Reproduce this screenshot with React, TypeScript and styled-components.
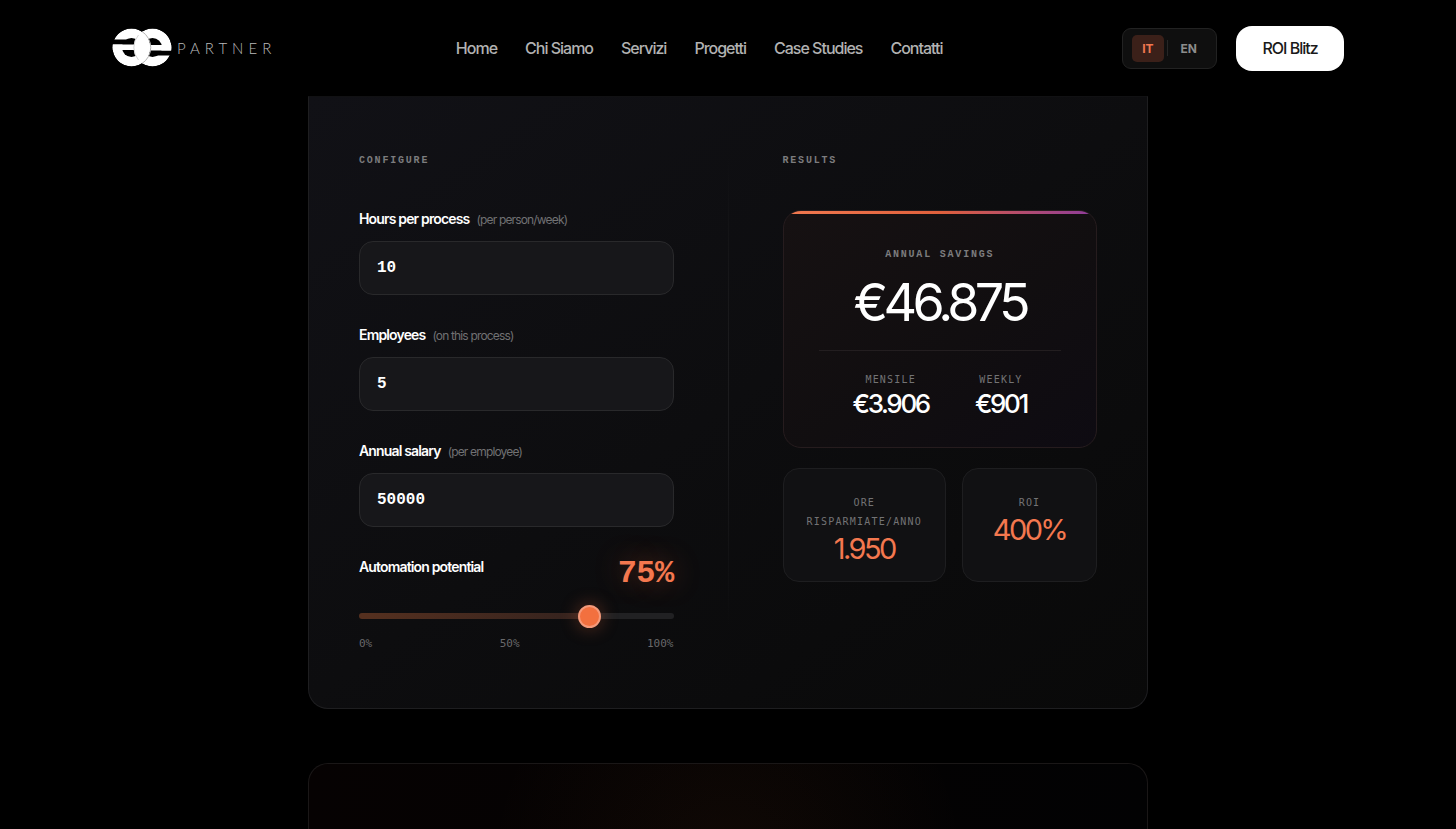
import React, { useState } from 'react';
import styled, { createGlobalStyle, css } from 'styled-components';

const sans = `Inter, "Liberation Sans", sans-serif`;
const mono = `"DejaVu Sans Mono", "Liberation Mono", monospace`;
const monoBold = `"Liberation Mono", monospace`;

const GlobalStyle = createGlobalStyle`
  *, *::before, *::after { box-sizing: border-box; }
  body {
    margin: 0;
    background: #000;
    color: #fff;
    font-family: ${sans};
    -webkit-font-smoothing: antialiased;
  }
`;

const Page = styled.div`
  min-height: 100vh;
  display: flex;
  flex-direction: column;
`;

const Header = styled.header`
  width: 100%;
  max-width: 1264px;
  height: 96px;
  margin: 0 auto;
  padding: 0 16px;
  display: flex;
  align-items: center;
  justify-content: space-between;
`;

const Brand = styled.a`
  display: flex;
  align-items: center;
  gap: 5px;
  color: #b9b9b9;
  text-decoration: none;
`;

const BrandName = styled.span`
  font-family: Lato, sans-serif;
  font-weight: 300;
  font-size: 15px;
  line-height: 20px;
  letter-spacing: 5px;
`;

const Nav = styled.nav`
  display: flex;
  gap: 28px;
`;

const NavLink = styled.a`
  color: #b2b2b2;
  font-size: 16px;
  font-weight: 500;
  line-height: 20px;
  letter-spacing: -1px;
  text-decoration: none;
`;

const Actions = styled.div`
  display: flex;
  align-items: center;
  gap: 19px;
`;

const LanguageSwitch = styled.div`
  display: flex;
  align-items: center;
  gap: 3px;
  height: 41px;
  padding: 0 9px;
  background: #0f0f0f;
  border: 1px solid #222;
  border-radius: 9px;
`;

const LanguageButton = styled.button<{ $active?: boolean }>`
  height: 27px;
  padding: 0 10px;
  border: 0;
  border-radius: 5px;
  background: ${(p) => (p.$active ? '#3b2019' : 'transparent')};
  color: ${(p) => (p.$active ? '#f27850' : '#8c8c8c')};
  font-family: ${sans};
  font-size: 12px;
  font-weight: 700;
`;

const LanguageRule = styled.span`
  width: 1px;
  height: 16px;
  background: #262626;
`;

const CtaButton = styled.button`
  min-width: 108px;
  height: 45px;
  padding: 0 24px;
  border: 0;
  border-radius: 16px;
  background: #fff;
  color: #1a1a1a;
  font-family: ${sans};
  font-size: 16px;
  font-weight: 500;
  letter-spacing: -1px;
`;

const Main = styled.main`
  flex: 1;
  width: 100%;
  max-width: 840px;
  margin: 0 auto;
  display: flex;
  flex-direction: column;
  gap: 54px;
`;

const Calculator = styled.section`
  display: grid;
  grid-template-columns: minmax(0, 1fr) 1px minmax(0, 1fr);
  gap: 54px;
  padding: 54px 50px 56px;
  border: 1px solid #1e1e20;
  border-top-color: #111113;
  border-radius: 0 0 20px 20px;
  background: linear-gradient(145deg, #111116 0%, #0d0d0f 50%, #090909 100%);
`;

const ColumnRule = styled.div`
  height: 480px;
  background: linear-gradient(180deg, transparent, #1b1b1d 40%, #1b1b1d 60%, transparent);
`;

const Column = styled.div`
  display: flex;
  flex-direction: column;
`;

const eyebrow = css`
  font-family: ${monoBold};
  font-size: 10px;
  font-weight: 700;
  letter-spacing: 0.18em;
  text-transform: uppercase;
  color: #7c7c7e;
`;

const ColumnTitle = styled.h2`
  ${eyebrow}
  margin: 0 0 39px;
  line-height: 20px;
`;

const Field = styled.div`
  display: flex;
  flex-direction: column;
  gap: 12px;
  margin-bottom: 31px;
`;

const Label = styled.label`
  height: 19px;
  font-size: 14px;
  font-weight: 600;
  line-height: 18px;
  letter-spacing: -0.06em;
`;

const Hint = styled.span`
  margin-left: 7px;
  color: #717173;
  font-size: 12px;
  font-weight: 400;
`;

const TextInput = styled.input`
  width: 100%;
  height: 54px;
  padding: 0 17px;
  border: 1px solid #29292b;
  border-radius: 14px;
  outline: 0;
  background: #17171a;
  color: #fff;
  font-family: ${monoBold};
  font-size: 16px;
  font-weight: 700;
`;

const SliderHead = styled.div`
  display: flex;
  justify-content: space-between;
  align-items: flex-start;
`;

const SliderValue = styled.output`
  color: #f4784f;
  font-family: ${monoBold};
  font-size: 32px;
  font-weight: 700;
  line-height: 32px;
  letter-spacing: -0.02em;
  text-shadow: 0 0 28px rgba(242, 112, 66, 0.4);
`;

const Slider = styled.input`
  -webkit-appearance: none;
  appearance: none;
  width: 100%;
  height: 23px;
  margin: 14px 0 9px;
  background: transparent;

  &::-webkit-slider-runnable-track {
    height: 6px;
    border-radius: 3px;
    background: linear-gradient(90deg, #55301f 0%, #55301f 2%, #33221e 73%, #212123 75%);
  }

  &::-webkit-slider-thumb {
    -webkit-appearance: none;
    width: 23px;
    height: 23px;
    margin-top: -8px;
    border: 2px solid #f59a7b;
    border-radius: 50%;
    background: #f2703f;
    box-shadow: 0 0 18px rgba(242, 112, 66, 0.35);
  }
`;

const Scale = styled.div`
  display: flex;
  justify-content: space-between;
  color: #69696b;
  font-family: ${mono};
  font-size: 11px;
  line-height: 16px;
`;

const SavingsCard = styled.div`
  position: relative;
  overflow: hidden;
  padding: 35px 35px 27px;
  border: 1px solid #261c1e;
  border-radius: 18px;
  background: linear-gradient(145deg, #161112 0%, #110e10 55%, #0e0b12 100%);
  text-align: center;

  &::before {
    content: '';
    position: absolute;
    inset: 0 0 auto;
    height: 3px;
    background: linear-gradient(90deg, #f27a50, #e0603c 50%, #8c3b9c);
  }
`;

const SavingsTitle = styled.h3`
  ${eyebrow}
  margin: 0 0 12px;
  line-height: 17px;
`;

const SavingsTotal = styled.div`
  font-size: 52px;
  font-weight: 400;
  line-height: 56px;
  letter-spacing: -0.09em;
`;

const Breakdown = styled.dl`
  display: flex;
  justify-content: center;
  gap: 46px;
  margin: 19px 0 0;
  padding-top: 21px;
  border-top: 1px solid #231e20;
`;

const Term = styled.dt`
  color: #737375;
  font-family: ${mono};
  font-size: 10px;
  line-height: 16px;
  letter-spacing: 0.12em;
  text-transform: uppercase;
`;

const Amount = styled.dd`
  margin: 0;
  font-size: 26px;
  font-weight: 500;
  line-height: 32px;
  letter-spacing: -0.09em;
`;

const Metrics = styled.dl`
  display: grid;
  grid-template-columns: 1fr 1fr;
  gap: 16px;
  margin: 20px 0 0;
`;

const Metric = styled.div`
  padding: 24px 23px 18px;
  border: 1px solid #1e1e20;
  border-radius: 16px;
  background: #111113;
  text-align: center;
`;

const MetricTerm = styled(Term)`
  line-height: 19px;
`;

const MetricValue = styled.dd`
  margin: 4px 0 0;
  font-size: 29px;
  font-weight: 400;
  line-height: 28px;
  letter-spacing: -0.09em;
  color: #f4784f;
`;

const NextPanel = styled.section`
  flex: 1;
  border: 1px solid #1a1717;
  border-bottom: 0;
  border-radius: 20px 20px 0 0;
  background:
    radial-gradient(circle at 50% 100px, rgba(242, 130, 50, 0.05), transparent 240px),
    linear-gradient(90deg, #060202, #020203);
`;

const LogoMark = () => (
  <svg width="60" height="40" viewBox="0 0 60 40" aria-hidden="true">
    <defs>
      <mask id="letter">
        <circle cx="19.5" cy="19.5" r="19" fill="#fff" />
        <circle cx="19.5" cy="19.5" r="9.5" fill="#000" />
        <rect x="0" y="11.5" width="20" height="5" fill="#000" />
        <rect x="0" y="16.5" width="30" height="5.5" fill="#fff" />
      </mask>
      <clipPath id="disc">
        <circle cx="19.5" cy="19.5" r="19" />
      </clipPath>
    </defs>
    <g clipPath="url(#disc)">
      <rect width="40" height="40" fill="#fff" mask="url(#letter)" />
    </g>
    <g transform="rotate(180 30 19.5)">
      <g clipPath="url(#disc)">
        <rect width="40" height="40" fill="#fff" mask="url(#letter)" />
      </g>
    </g>
    <g fill="none" stroke="#b5b5b5" strokeWidth="1">
      <path d="M30 3.5 A19 19 0 0 1 30 35.5" />
      <path d="M26.5 7 A19 19 0 0 0 26.5 32" stroke="#d5d5d5" />
    </g>
  </svg>
);

const links = ['Home', 'Chi Siamo', 'Servizi', 'Progetti', 'Case Studies', 'Contatti'];

const fields = [
  { id: 'hours', label: 'Hours per process', hint: '(per person/week)', value: '10' },
  { id: 'employees', label: 'Employees', hint: '(on this process)', value: '5' },
  { id: 'salary', label: 'Annual salary', hint: '(per employee)', value: '50000' },
];

export default function App() {
  const [potential, setPotential] = useState(75);

  return (
    <Page>
      <GlobalStyle />
      <Header>
        <Brand href="#" aria-label="Partner">
          <LogoMark />
          <BrandName>PARTNER</BrandName>
        </Brand>
        <Nav>
          {links.map((link) => (
            <NavLink key={link} href="#">{link}</NavLink>
          ))}
        </Nav>
        <Actions>
          <LanguageSwitch>
            <LanguageButton $active>IT</LanguageButton>
            <LanguageRule />
            <LanguageButton>EN</LanguageButton>
          </LanguageSwitch>
          <CtaButton>ROI Blitz</CtaButton>
        </Actions>
      </Header>
      <Main>
        <Calculator>
          <Column>
            <ColumnTitle>Configure</ColumnTitle>
            {fields.map((field) => (
              <Field key={field.id}>
                <Label htmlFor={field.id}>
                  {field.label}
                  <Hint>{field.hint}</Hint>
                </Label>
                <TextInput id={field.id} inputMode="numeric" defaultValue={field.value} />
              </Field>
            ))}
            <SliderHead>
              <Label htmlFor="potential">Automation potential</Label>
              <SliderValue htmlFor="potential">{potential}%</SliderValue>
            </SliderHead>
            <Slider
              id="potential"
              type="range"
              min={0}
              max={100}
              value={potential}
              onChange={(e) => setPotential(Number(e.target.value))}
            />
            <Scale>
              <span>0%</span>
              <span>50%</span>
              <span>100%</span>
            </Scale>
          </Column>
          <ColumnRule />
          <Column>
            <ColumnTitle>Results</ColumnTitle>
            <SavingsCard>
              <SavingsTitle>Annual savings</SavingsTitle>
              <SavingsTotal>€46.875</SavingsTotal>
              <Breakdown>
                <div>
                  <Term>Mensile</Term>
                  <Amount>€3.906</Amount>
                </div>
                <div>
                  <Term>Weekly</Term>
                  <Amount>€901</Amount>
                </div>
              </Breakdown>
            </SavingsCard>
            <Metrics>
              <Metric>
                <MetricTerm>Ore risparmiate/anno</MetricTerm>
                <MetricValue>1.950</MetricValue>
              </Metric>
              <Metric>
                <MetricTerm>ROI</MetricTerm>
                <MetricValue>400%</MetricValue>
              </Metric>
            </Metrics>
          </Column>
        </Calculator>
        <NextPanel />
      </Main>
    </Page>
  );
}
